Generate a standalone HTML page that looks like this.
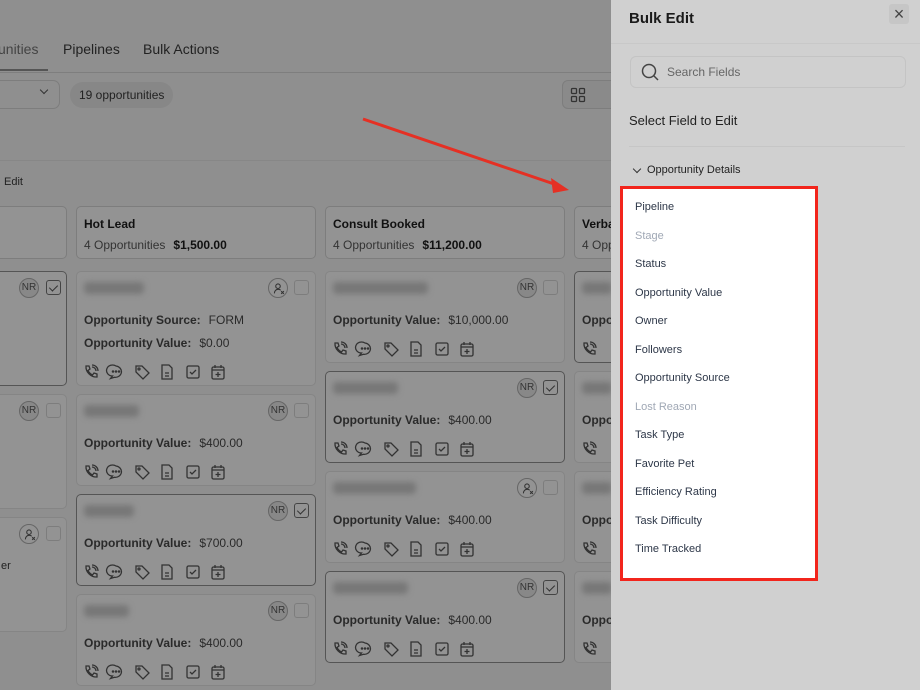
<!DOCTYPE html>
<html><head><meta charset="utf-8"><style>
*{box-sizing:border-box;margin:0;padding:0}
body{width:920px;height:690px;overflow:hidden;background:#8f8f8f;font-family:"Liberation Sans",sans-serif;position:relative;color:#1f1f1f}
.a{position:absolute}
.tab{font-size:14px;color:#222;top:41px}
.col{position:absolute;top:206px;height:53px;border:1px solid #7d7d7d;border-radius:5px;background:#939393}
.col b{position:absolute;left:7px;top:10px;font-size:12px;color:#111}
.col span{position:absolute;left:7px;top:31px;font-size:12px;color:#333}
.col span i{font-style:normal;font-weight:bold;color:#111;margin-left:8px}
.card{position:absolute;border:1px solid #858585;border-radius:5px;background:#939393}
.card.sel{border-color:#555}
.nm{position:absolute;left:7px;top:10px;height:12px;background:#777;border-radius:4px;filter:blur(3px)}
.nr{position:absolute;top:6px;width:20px;height:20px;border-radius:50%;border:1px solid #666;background:#888;font-size:10px;line-height:18px;text-align:center;color:#333}
.pu{position:absolute;top:6px;width:20px;height:20px;border-radius:50%;border:1px solid #666}
.cb{position:absolute;top:8px;width:15px;height:15px;border:1px solid #7d7d7d;border-radius:3px}
.cb.on{border-color:#444}
.cb.on:after{content:"";position:absolute;left:4px;top:2px;width:4px;height:7px;border:solid #333;border-width:0 1.5px 1.5px 0;transform:rotate(45deg)}
.lab{position:absolute;left:7px;font-size:12px;color:#2a2a2a;font-weight:bold}
.lab i{font-style:normal;font-weight:normal;margin-left:8px}
.ic{position:absolute;left:6px;width:160px;height:16px}
.panel{position:absolute;left:611px;top:0;width:309px;height:690px;background:#d0d0d0}
.fi{position:absolute;left:12px;font-size:11px;color:#2d3748}
.fi.d{color:#a0a8b5}
</style></head><body>
<svg width="0" height="0" style="position:absolute"><defs>
<g id="ph" fill="none" stroke="#333" stroke-width="1.3"><path d="M3 2l3 0 1 3-2 1.5c1 2 2.5 3.5 4.5 4.5L11 9l3 1 0 3c-6 0.5-11.5-5-11-11z"/><path d="M10 2a4 4 0 0 1 4 4M10 0a6 6 0 0 1 6 6" transform="translate(-1 1)"/></g>
<g id="ch" fill="none" stroke="#333" stroke-width="1.3"><path d="M8 2a6 5.5 0 1 0 -3.5 10l-2 2.5 4-1.2A6 5.5 0 1 0 8 2z"/><circle cx="5" cy="7.5" r=".6" fill="#333"/><circle cx="8" cy="7.5" r=".6" fill="#333"/><circle cx="11" cy="7.5" r=".6" fill="#333"/></g>
<g id="tg" fill="none" stroke="#333" stroke-width="1.3"><path d="M2 2h6l7 7-6 6-7-7z"/><circle cx="5" cy="5" r="1"/></g>
<g id="dc" fill="none" stroke="#333" stroke-width="1.3"><path d="M3 1h7l3 3v11H3z"/><path d="M6 9h4M6 12h4"/></g>
<g id="ck" fill="none" stroke="#333" stroke-width="1.3"><rect x="2" y="2" width="12" height="12" rx="1.5"/><path d="M5 8l2 2 4-4"/></g>
<g id="ca" fill="none" stroke="#333" stroke-width="1.3"><rect x="2" y="3" width="12" height="12" rx="1.5"/><path d="M5 1v3M11 1v3M2 6h12M8 8v5M5.5 10.5h5"/></g>
<g id="row"><use href="#ph"/><use href="#ch" x="25"/><use href="#tg" x="51"/><use href="#dc" x="76"/><use href="#ck" x="102"/><use href="#ca" x="127"/></g>
<g id="px" fill="none" stroke="#333" stroke-width="1.2"><circle cx="9" cy="7" r="2.5"/><path d="M5 15c0-3 2-4.5 4-4.5s2.5 .5 3 1"/><path d="M12.5 12.5l3 3M15.5 12.5l-3 3"/></g>
</defs></svg>

<div class="a tab" style="left:-2px;color:#444">unities</div>
<div class="a" style="left:0;top:69px;width:48px;height:2px;background:#555"></div>
<div class="a tab" style="left:63px">Pipelines</div>
<div class="a tab" style="left:143px">Bulk Actions</div>
<div class="a" style="left:0;top:72px;width:611px;height:1px;background:#7e7e7e"></div>
<div class="a" style="left:-10px;top:80px;width:70px;height:29px;border:1px solid #7d7d7d;border-radius:7px"></div>
<div class="a" style="left:41px;top:87px;width:6px;height:6px;border:solid #333;border-width:0 1.3px 1.3px 0;transform:rotate(45deg)"></div>
<div class="a" style="left:70px;top:82px;width:103px;height:26px;border-radius:13px;background:#878787;font-size:12px;line-height:26px;padding-left:9px;color:#222">19 opportunities</div>
<div class="a" style="left:562px;top:80px;width:60px;height:29px;border:1px solid #7d7d7d;border-radius:6px;background:#8a8a8a"></div>
<svg class="a" style="left:570px;top:87px" width="16" height="16" fill="none" stroke="#333" stroke-width="1.3"><rect x="1.5" y="1.5" width="5" height="5" rx="1"/><rect x="9.5" y="1.5" width="5" height="5" rx="1"/><rect x="1.5" y="9.5" width="5" height="5" rx="1"/><rect x="9.5" y="9.5" width="5" height="5" rx="1"/></svg>
<div class="a" style="left:0;top:160px;width:611px;height:1px;background:#878787"></div>
<div class="a" style="left:4px;top:176px;font-size:11px;color:#222">Edit</div>

<svg class="a" style="left:0;top:0" width="611" height="260"><line x1="363" y1="119" x2="560" y2="186" stroke="#e53024" stroke-width="3"/><path d="M569 190 L551 178 L553 193 Z" fill="#e53024"/></svg>

<div class="col" style="left:-10px;width:77px"></div>
<div class="col" style="left:76px;width:240px"><b>Hot Lead</b><span>4 Opportunities<i>$1,500.00</i></span></div>
<div class="col" style="left:325px;width:240px"><b>Consult Booked</b><span>4 Opportunities<i>$11,200.00</i></span></div>
<div class="col" style="left:574px;width:60px"><b>Verba</b><span>4 Opp</span></div>

<div class="card sel" style="left:-10px;top:271px;width:77px;height:115px"><div class="nr" style="left:28px">NR</div><div class="cb on" style="left:55px"></div></div>
<div class="card" style="left:-10px;top:394px;width:77px;height:115px"><div class="nr" style="left:28px">NR</div><div class="cb" style="left:55px"></div></div>
<div class="card" style="left:-10px;top:517px;width:77px;height:115px"><svg class="pu" style="left:28px" viewBox="-1 -1 20 20"><use href="#px"/></svg><div class="cb" style="left:55px"></div><div class="a" style="left:10px;top:42px;font-size:11px">er</div></div>

<div class="card" style="left:76px;top:271px;width:240px;height:115px"><div class="nm" style="width:60px"></div><svg class="pu" style="left:191px" viewBox="-1 -1 20 20"><use href="#px"/></svg><div class="cb" style="left:217px"></div>
<div class="lab" style="top:41px">Opportunity Source:<i>FORM</i></div><div class="lab" style="top:64px">Opportunity Value:<i>$0.00</i></div><svg class="ic" style="top:92px"><use href="#row"/></svg></div>
<div class="card" style="left:76px;top:394px;width:240px;height:92px"><div class="nm" style="width:55px"></div><div class="nr" style="left:191px">NR</div><div class="cb" style="left:217px"></div>
<div class="lab" style="top:41px">Opportunity Value:<i>$400.00</i></div><svg class="ic" style="top:69px"><use href="#row"/></svg></div>
<div class="card sel" style="left:76px;top:494px;width:240px;height:92px"><div class="nm" style="width:50px"></div><div class="nr" style="left:191px">NR</div><div class="cb on" style="left:217px"></div>
<div class="lab" style="top:41px">Opportunity Value:<i>$700.00</i></div><svg class="ic" style="top:69px"><use href="#row"/></svg></div>
<div class="card" style="left:76px;top:594px;width:240px;height:92px"><div class="nm" style="width:45px"></div><div class="nr" style="left:191px">NR</div><div class="cb" style="left:217px"></div>
<div class="lab" style="top:41px">Opportunity Value:<i>$400.00</i></div><svg class="ic" style="top:69px"><use href="#row"/></svg></div>

<div class="card" style="left:325px;top:271px;width:240px;height:92px"><div class="nm" style="width:95px"></div><div class="nr" style="left:191px">NR</div><div class="cb" style="left:217px"></div>
<div class="lab" style="top:41px">Opportunity Value:<i>$10,000.00</i></div><svg class="ic" style="top:69px"><use href="#row"/></svg></div>
<div class="card sel" style="left:325px;top:371px;width:240px;height:92px"><div class="nm" style="width:65px"></div><div class="nr" style="left:191px">NR</div><div class="cb on" style="left:217px"></div>
<div class="lab" style="top:41px">Opportunity Value:<i>$400.00</i></div><svg class="ic" style="top:69px"><use href="#row"/></svg></div>
<div class="card" style="left:325px;top:471px;width:240px;height:92px"><div class="nm" style="width:83px"></div><svg class="pu" style="left:191px" viewBox="-1 -1 20 20"><use href="#px"/></svg><div class="cb" style="left:217px"></div>
<div class="lab" style="top:41px">Opportunity Value:<i>$400.00</i></div><svg class="ic" style="top:69px"><use href="#row"/></svg></div>
<div class="card sel" style="left:325px;top:571px;width:240px;height:92px"><div class="nm" style="width:75px"></div><div class="nr" style="left:191px">NR</div><div class="cb on" style="left:217px"></div>
<div class="lab" style="top:41px">Opportunity Value:<i>$400.00</i></div><svg class="ic" style="top:69px"><use href="#row"/></svg></div>

<div class="card sel" style="left:574px;top:271px;width:60px;height:92px"><div class="nm" style="width:30px"></div><div class="lab" style="top:41px">Oppo</div><svg class="ic" style="top:69px"><use href="#ph"/></svg></div>
<div class="card" style="left:574px;top:371px;width:60px;height:92px"><div class="nm" style="width:30px"></div><div class="lab" style="top:41px">Oppo</div><svg class="ic" style="top:69px"><use href="#ph"/></svg></div>
<div class="card" style="left:574px;top:471px;width:60px;height:92px"><div class="nm" style="width:30px"></div><div class="lab" style="top:41px">Oppo</div><svg class="ic" style="top:69px"><use href="#ph"/></svg></div>
<div class="card" style="left:574px;top:571px;width:60px;height:92px"><div class="nm" style="width:30px"></div><div class="lab" style="top:41px">Oppo</div><svg class="ic" style="top:69px"><use href="#ph"/></svg></div>

<div class="panel">
<div class="a" style="left:18px;top:10px;font-size:15px;font-weight:bold;color:#1a1a1a">Bulk Edit</div>
<div class="a" style="left:278px;top:4px;width:20px;height:20px;background:#c6c6c6;border-radius:3px;font-size:18px;line-height:20px;text-align:center;color:#444">&#215;</div>
<div class="a" style="left:0;top:43px;width:309px;height:1px;background:#c8c8c8"></div>
<div class="a" style="left:19px;top:56px;width:276px;height:32px;border:1px solid #c4c4c4;border-radius:6px"></div>
<svg class="a" style="left:30px;top:63px" width="18" height="18" fill="none" stroke="#444" stroke-width="1.5"><circle cx="8" cy="8" r="6.5"/><path d="M13 13l4 4"/></svg>
<div class="a" style="left:56px;top:65px;font-size:12px;color:#666">Search Fields</div>
<div class="a" style="left:18px;top:113px;font-size:13px;color:#222">Select Field to Edit</div>
<div class="a" style="left:18px;top:146px;width:276px;height:1px;background:#c6c6c6"></div>
<div class="a" style="left:23px;top:166px;width:6px;height:6px;border:solid #333;border-width:0 1.2px 1.2px 0;transform:rotate(45deg)"></div>
<div class="a" style="left:36px;top:164px;font-size:11px;color:#222">Opportunity Details</div>
<div class="a" style="left:9px;top:186px;width:198px;height:395px;background:#fff;border:3px solid #f2251c">
<div class="fi" style="top:12px">Pipeline</div>
<div class="fi d" style="top:41px">Stage</div>
<div class="fi" style="top:69px">Status</div>
<div class="fi" style="top:98px">Opportunity Value</div>
<div class="fi" style="top:126px">Owner</div>
<div class="fi" style="top:155px">Followers</div>
<div class="fi" style="top:183px">Opportunity Source</div>
<div class="fi d" style="top:212px">Lost Reason</div>
<div class="fi" style="top:240px">Task Type</div>
<div class="fi" style="top:269px">Favorite Pet</div>
<div class="fi" style="top:297px">Efficiency Rating</div>
<div class="fi" style="top:326px">Task Difficulty</div>
<div class="fi" style="top:354px">Time Tracked</div>
</div>
</div>
</body></html>
